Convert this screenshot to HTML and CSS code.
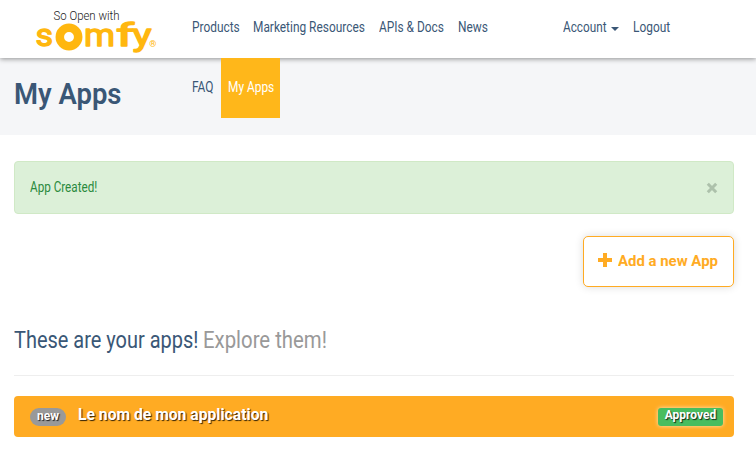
FILE: index.html
```html
<!DOCTYPE html>
<html lang="en">
<head>
<meta charset="utf-8">
<title>My Apps</title>
<link rel="stylesheet" href="styles.css">
</head>
<body>
<header class="navbar">
  <a class="brand" href="#">
    <svg class="logo" width="124" height="50" viewBox="34 5 124 50" aria-label="So Open with somfy">
      <text class="tagline" x="53.500" y="19.500" textLength="66" lengthAdjust="spacingAndGlyphs">So Open with</text>
      <g class="wordmark">
        <text x="35.500" y="45.500" textLength="17.500" lengthAdjust="spacingAndGlyphs">s</text>
        <circle cx="69" cy="37" r="9.200" />
        <text x="84" y="45.500" textLength="31" lengthAdjust="spacingAndGlyphs">m</text>
        <text x="116" y="45.500" textLength="18" lengthAdjust="spacingAndGlyphs">f</text>
        <text x="132.500" y="45.500" textLength="19" lengthAdjust="spacingAndGlyphs">y</text>
      </g>
      <text class="reg" x="149.200" y="46.500">®</text>
    </svg>
  </a>
  <nav class="menu">
    <a class="item products" href="#"><span class="din">Products</span></a>
    <a class="item marketing" href="#"><span class="din">Marketing Resources</span></a>
    <a class="item docs" href="#"><span class="din">APIs &amp; Docs</span></a>
    <a class="item news" href="#"><span class="din">News</span></a>
    <a class="item faq" href="#"><span class="din">FAQ</span></a>
    <a class="item apps active" href="#"><span class="din">My Apps</span></a>
  </nav>
  <nav class="user">
    <a class="item account" href="#"><span class="din">Account</span><span class="caret"></span></a>
    <a class="item logout" href="#"><span class="din">Logout</span></a>
  </nav>
</header>
<section class="hero"><h1>My Apps</h1></section>
<main class="content">
  <div class="alert"><span class="message">App Created!</span>
    <button class="close" aria-label="Close"><svg width="12" height="12" viewBox="0 0 12 12"><path d="M1.800 1.800L10.200 10.200M10.200 1.800L1.800 10.200"/></svg></button>
  </div>
  <div class="actions">
    <button class="add"><svg width="14" height="14" viewBox="0 0 14 14"><path d="M5 0H9V5H14V9H9V14H5V9H0V5H5Z"/></svg><span class="caption">Add a new App</span></button>
  </div>
  <h2><span class="lead">These are your apps!</span><small>Explore them!</small></h2>
  <div class="app"><span class="badge">new</span><span class="name">Le nom de mon application</span><span class="label">Approved</span></div>
</main>
</body>
</html>
```

FILE: styles.css
```css
* { box-sizing: border-box; }
body { margin: 0; background: #fff; color: #3a5776; font: 14px/20px Roboto, "Liberation Sans", sans-serif; overflow: hidden; }
a { color: inherit; text-decoration: none; }
button { font: inherit; padding: 0; }
svg { display: block; }

.navbar { position: relative; z-index: 1; display: flex; height: 58px; background: #fff; box-shadow: 0 1px 5px rgba(0, 0, 0, .42); }
.brand { width: 151px; padding: 5px 0 0 34px; }
.logo { overflow: visible; }
.tagline { font: 300 12px Roboto, sans-serif; fill: #222; }
.wordmark { font: 400 32px Roboto, sans-serif; fill: #ffb70f; stroke: #ffb70f; stroke-width: 1.4; stroke-linejoin: round; }
.wordmark circle { fill: none; stroke-width: 8.5; }
.reg { font: 500 9px Roboto, sans-serif; fill: #ffb70f; }

.menu { display: flex; flex-wrap: wrap; align-content: flex-start; width: 350px; height: 120px; margin: -2px 0 0 34px; }
.user { display: flex; height: 60px; margin: -2px 0 0 21px; }
.item { height: 60px; padding-left: 7px; line-height: 59px; white-space: nowrap; }
.din, .message, .caption, .lead, h2 small, h1, .name { display: inline-block; transform-origin: 0 50%; }
.din { transform: scaleX(.85); }
.products { width: 61px; }
.marketing { width: 126px; }
.docs { width: 79px; }
.news { width: 44px; margin-right: 30px; }
.faq { width: 36px; }
.apps { width: 59px; }
.account { display: flex; align-items: flex-start; width: 70px; }
.account .din { width: 42px; transform: scaleX(.84); }
.logout { width: 52px; }
.active { background: #ffb71a; color: #fff; }
.caret { margin: 29px 0 0 6px; border: 4px solid transparent; border-top-color: currentColor; border-bottom: 0; }

.hero { height: 77px; padding: 18px 14px; background: #f5f6f8; }
h1 { margin: 0; font-size: 30px; font-weight: 600; line-height: 36px; transform: scaleX(.915); }

.content { padding: 26px 22px 0 14px; }
.alert { display: flex; justify-content: space-between; align-items: center; height: 53px; padding: 0 15px; border: 1px solid #d0e9c6; border-radius: 4px; background: #dcf0d8; color: #2b8a3e; }
.message { margin-bottom: 1px; transform: scaleX(.835); }
.close { border: 0; background: none; }
.close path { fill: none; stroke: #adc1ab; stroke-width: 3; }
.actions { display: flex; justify-content: flex-end; margin-top: 22px; }
.add { display: flex; align-items: center; gap: 6px; width: 151px; height: 51px; padding-left: 14px; border: 1px solid #ffab23; border-radius: 5px; background: #fff; box-shadow: 0 0 9px rgba(0, 0, 0, .14); color: #ffab23; font-size: 16px; font-weight: 700; white-space: nowrap; }
.add svg { margin-top: -4px; }
.add path { fill: #ffab23; }
.caption { margin-top: -2px; font-size: 15px; transform: scaleX(.995); }
h2 { display: flex; height: 89px; margin: 0 0 20px; padding-top: 39px; border-bottom: 1px solid #eee; font-size: 23px; font-weight: 400; line-height: 30px; white-space: nowrap; }
.lead { width: 189px; transform: scaleX(.868); }
h2 small { color: #999; font-size: 23px; transform: scaleX(.885); }
.app { display: flex; align-items: center; height: 41px; padding: 0 11px 0 16px; border-radius: 4px; background: #ffab23; color: #fff; font-weight: 700; text-shadow: 1px 1px 1px rgba(0, 0, 0, .8); white-space: nowrap; }
.badge { width: 36px; height: 18px; border-radius: 9px; background: #999; font-size: 12px; line-height: 17px; text-align: center; }
.name { margin: -4px 0 0 12px; font-size: 16px; transform: scaleX(.98); }
.label { width: 65px; height: 18px; margin-left: auto; border-radius: 3px; background: #48bd5f; box-shadow: 0 0 4px rgba(255, 255, 255, .7); font-size: 12px; line-height: 15px; text-align: center; }
```
